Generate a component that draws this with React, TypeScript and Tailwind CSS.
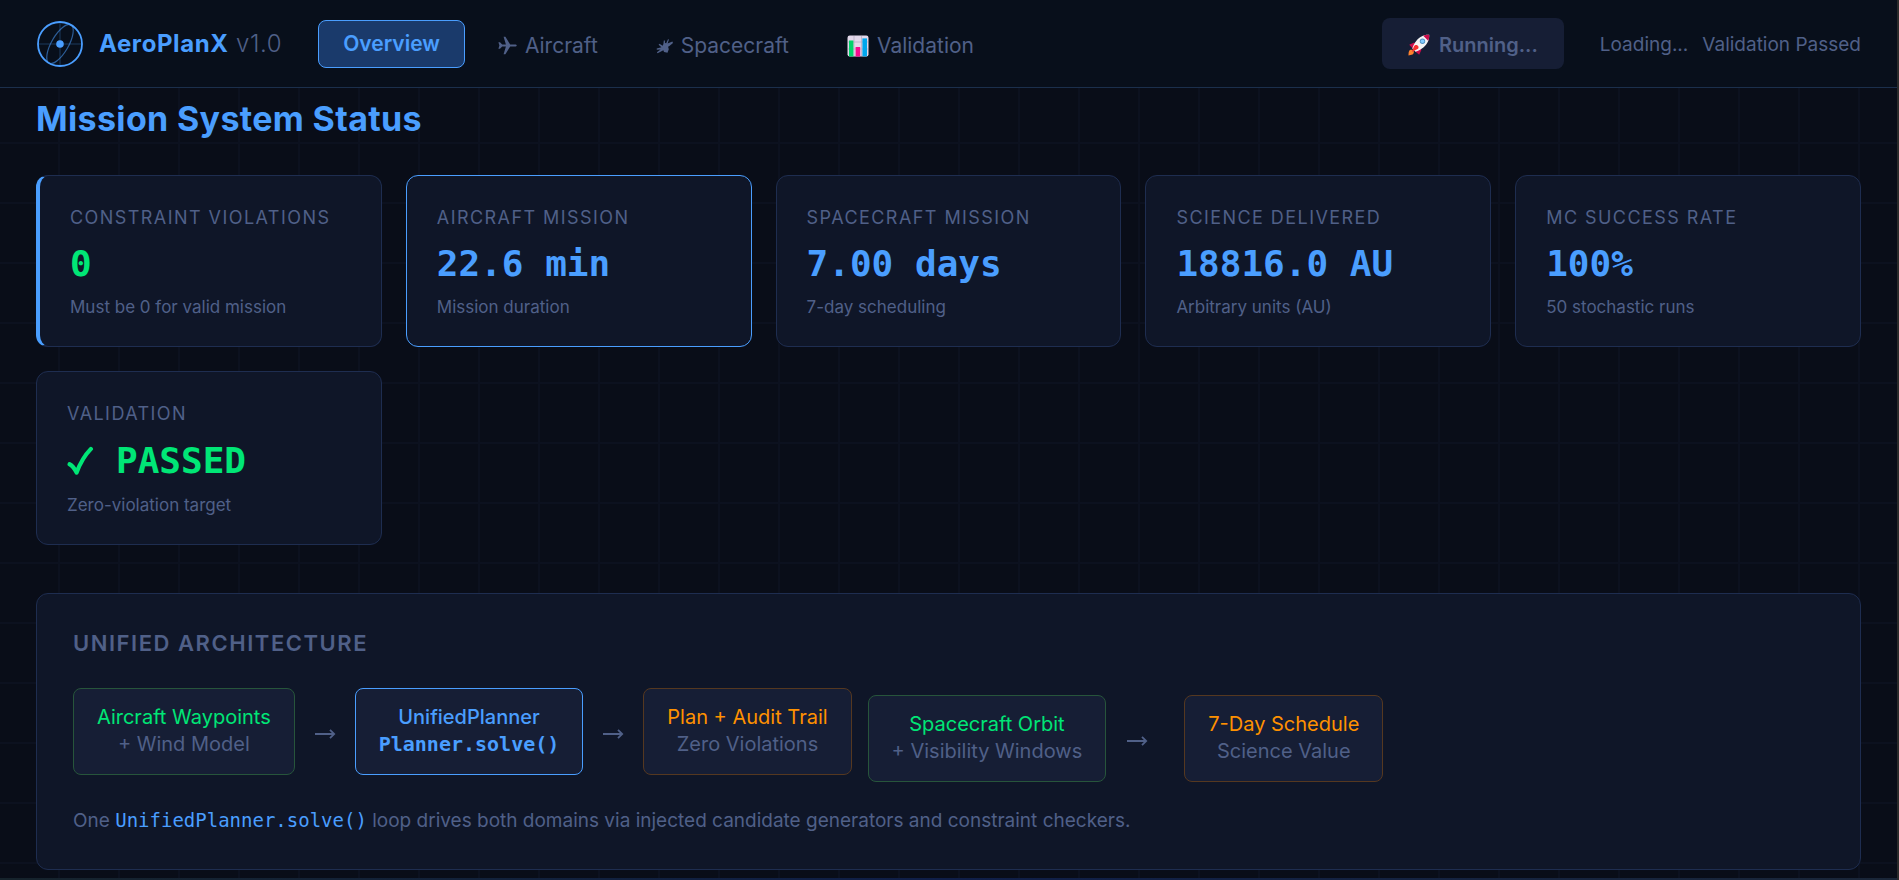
import { useState, type ReactNode } from "react";

interface Metric {
  label: string;
  value: string;
  note: string;
  valueClass: string;
  cardClass: string;
  passed?: boolean;
}

const metrics: Metric[] = [
  {
    label: "Constraint Violations",
    value: "0",
    note: "Must be 0 for valid mission",
    valueClass: "leading-[48px] text-[#00e676]",
    cardClass: "border-[#1e2d50] border-l-4 border-l-[#4a9eff]",
  },
  {
    label: "Aircraft Mission",
    value: "22.6 min",
    note: "Mission duration",
    valueClass: "leading-[48px] text-[#4a9eff]",
    cardClass: "border-[#4a9eff]",
  },
  {
    label: "Spacecraft Mission",
    value: "7.00 days",
    note: "7-day scheduling",
    valueClass: "leading-[48px] text-[#4a9eff]",
    cardClass: "border-[#1e2d50]",
  },
  {
    label: "Science Delivered",
    value: "18816.0 AU",
    note: "Arbitrary units (AU)",
    valueClass: "leading-[48px] text-[#4a9eff]",
    cardClass: "border-[#1e2d50]",
  },
  {
    label: "MC Success Rate",
    value: "100%",
    note: "50 stochastic runs",
    valueClass: "leading-[48px] text-[#4a9eff]",
    cardClass: "border-[#1e2d50]",
  },
  {
    label: "Validation",
    value: "PASSED",
    note: "Zero-violation target",
    valueClass: "leading-[50px] text-[#00e676]",
    cardClass: "border-[#1e2d50]",
    passed: true,
  },
];

const MONO = "font-['DejaVu_Sans_Mono',monospace]";

function Logo() {
  return (
    <svg width="48" height="48" viewBox="0 0 48 48" fill="none" stroke="#4a9eff">
      <path d="M24 2v44M2 24h44" strokeWidth="1.5" opacity="0.2" />
      <circle cx="24" cy="24" r="22" strokeWidth="1.8" />
      <ellipse
        cx="24"
        cy="24"
        rx="8.5"
        ry="22"
        strokeWidth="1.2"
        opacity="0.55"
        transform="rotate(30 24 24)"
      />
      <circle cx="24" cy="24" r="3.8" fill="#4a9eff" stroke="none" />
    </svg>
  );
}

function PlaneIcon() {
  return (
    <svg width="19" height="19" viewBox="0 0 19 19" fill="currentColor">
      <path d="M.4 6.2H2l2.200 2.300h3.700L5.600.8h1.800l4.800 7.700H17c1 0 1.700.4 1.700 1s-.7 1-1.700 1h-4.800l-4.800 7.700H5.600l2.300-7.700H4.200L2 12.800H.4l1-3.300z" />
    </svg>
  );
}

function SatelliteIcon() {
  return (
    <svg width="17" height="16" viewBox="0 0 17 16" fill="currentColor">
      <path d="M7.4 6 7.800 2.400l1.100.1.100 2.600 1.200.2L12 1.200l1 .4-1.400 3.800 4.800-1.800.6 1.300-3.600 3-1.300.8.7 2.500-1.300 3.500-3.500-.8-.6-1.700-5.800 3-.7-1 3.700-2.700-3.800.2-.1-1.300 4.700-1.200-2.800-2.400.8-1 3.300 1.900z" />
    </svg>
  );
}

function ChartIcon() {
  return (
    <svg width="22" height="22" viewBox="0 0 22 22">
      <rect x="0.5" y="0.5" width="21" height="21" rx="2.2" fill="#e2d8ea" />
      <path
        d="M7 1v20M14.5 1v20M1 7h20M1 14h20"
        stroke="#b9aec6"
        strokeWidth="0.8"
      />
      <rect x="2" y="5.5" width="4.4" height="16" fill="#00d26a" />
      <rect x="8.6" y="12" width="4.6" height="9.5" fill="#f70a8d" />
      <rect x="15.4" y="3.4" width="4.6" height="18" fill="#00a6ed" />
    </svg>
  );
}

function RocketIcon() {
  return (
    <svg width="22" height="22" viewBox="0 0 22 22">
      <path d="M1.6 16.2c1.6-1 3.8-.3 4.2 1.3.3 1.7-.8 3-2.3 3.3l-3 .7c0-2 .1-4.4 1.1-5.3z" fill="#ff822d" />
      <path d="M1.2 10.8 6.2 8.5l3 3-4.5 3zM11.2 20.8l2.3-5-3-3-3.3 4.7z" fill="#ca0b4a" />
      <path d="M21.2.8c-5.7-.3-9.7 2.2-12.6 5.8C6.7 9 5.3 11.6 4.3 14.5l3.2 3.2c2.9-1 5.5-2.4 7.9-4.3 3.6-2.9 6.1-6.9 5.8-12.6z" fill="#f4f4f4" />
      <path d="M21.2.8c-2.3-.1-4.3.2-6 1l5 5c.8-1.7 1.1-3.7 1-6z" fill="#ca0b4a" />
      <path d="m3.8 17.9 2-5.2c.5-1.3 2-2 3.4-1.4 1.4.7 1.8 2.3.9 3.4z" fill="#f8312f" />
      <circle cx="14.5" cy="7.3" r="2.7" fill="#5092c4" />
      <circle cx="14.5" cy="7.3" r="1.8" fill="#83cbff" />
    </svg>
  );
}

function CheckIcon() {
  return (
    <svg
      width="27"
      height="30"
      viewBox="0 0 27 30"
      fill="none"
      stroke="currentColor"
      strokeLinecap="round"
      strokeLinejoin="round"
      strokeWidth="4.2"
    >
      <path d="M2.6 18.2c2.4 1 4.800 4 7 8.400C12.400 19 17.200 9.800 23.900 2.900" />
    </svg>
  );
}

const tabs: { name: string; icon: ReactNode }[] = [
  { name: "Overview", icon: null },
  { name: "Aircraft", icon: <PlaneIcon /> },
  { name: "Spacecraft", icon: <SatelliteIcon /> },
  { name: "Validation", icon: <ChartIcon /> },
];

function MetricCard({ metric }: { metric: Metric }) {
  return (
    <article
      className={`rounded-xl border bg-[#0f1628] px-[30px] pt-[30px] pb-[27px] ${metric.cardClass}`}
    >
      <h2 className="text-lg leading-6 tracking-[0.08em] whitespace-nowrap uppercase">
        {metric.label}
      </h2>
      <p
        className={`mt-[10px] flex items-center gap-[22px] text-[36px] font-bold whitespace-nowrap ${MONO} ${metric.valueClass}`}
      >
        {metric.passed && <CheckIcon />}
        {metric.value}
      </p>
      <p className="mt-[7px] text-[17px] leading-6">{metric.note}</p>
    </article>
  );
}

function FlowBox({
  className,
  title,
  titleClass,
  children,
}: {
  className: string;
  title: string;
  titleClass: string;
  children: ReactNode;
}) {
  return (
    <div
      className={`rounded-lg border bg-[#161e35] px-[23px] pt-[15px] pb-4 text-center text-xl leading-[27px] whitespace-nowrap ${className}`}
    >
      <div className={titleClass}>{title}</div>
      {children}
    </div>
  );
}

function Arrow() {
  return (
    <svg
      className="mt-1"
      width="22"
      height="12"
      viewBox="0 0 22 12"
      fill="none"
      stroke="currentColor"
      strokeWidth="1.8"
    >
      <path d="M1 6h19M16 1.8 20.2 6 16 10.2" />
    </svg>
  );
}

export default function App() {
  const [active, setActive] = useState("Overview");

  return (
    <div className="min-h-screen border-r-2 border-[#2b2b2b] bg-[#090d18] font-[Inter,sans-serif] text-[#506088]">
      {/* Top bar */}
      <header className="flex h-[88px] items-center border-b border-[#1b2f4c] bg-[#080f1b] px-9">
        <div className="flex items-center gap-[15px]">
          <Logo />
          <div className="text-2xl tracking-wide whitespace-nowrap">
            <span className="font-bold text-[#4a9eff]">AeroPlanX</span>{" "}
            <span className="font-light">v1.0</span>
          </div>
        </div>

        <nav className="ml-9 flex items-center gap-2">
          {tabs.map((tab) => (
            <button
              key={tab.name}
              type="button"
              onClick={() => setActive(tab.name)}
              className={`flex h-12 items-center gap-2 rounded-lg border px-6 text-[21px] ${
                tab.icon ? "pt-1" : ""
              } ${
                active === tab.name
                  ? "border-[#4a9eff] bg-[#1a3a6b] font-semibold text-[#4a9eff]"
                  : "border-transparent"
              }`}
            >
              {tab.icon}
              {tab.name}
            </button>
          ))}
        </nav>

        <div className="ml-auto flex items-center gap-9">
          <button
            type="button"
            className="flex h-[51px] items-center gap-[9px] rounded-lg bg-[#161e35] px-[26px] pt-[3px] text-xl font-semibold"
          >
            <RocketIcon />
            Running...
          </button>
          <div className="flex gap-[14px] pt-1 text-[19px] whitespace-nowrap">
            <span>Loading...</span>
            <span>Validation Passed</span>
          </div>
        </div>
      </header>

      {/* Dashboard over the 60px grid */}
      <main className="bg-[linear-gradient(#0c111f_2px,transparent_2px),linear-gradient(90deg,#0c111f_2px,transparent_2px)] bg-[size:60px_60px] bg-[position:58px_54px] px-9 pt-[10px] pb-2">
        <h1 className="text-[34px] leading-[42px] font-bold tracking-[0.01em] text-[#4a9eff]">
          Mission System Status
        </h1>

        <section className="mt-[35px] grid grid-cols-5 gap-6">
          {metrics.map((metric) => (
            <MetricCard key={metric.label} metric={metric} />
          ))}
        </section>

        <section className="mt-12 rounded-xl border border-[#1e2d50] bg-[#0f1628] px-9 pt-[35px] pb-[34px]">
          <h2 className="text-[22px] leading-7 font-semibold tracking-[0.07em] uppercase">
            Unified Architecture
          </h2>

          <div className="mt-[31px] flex items-start">
            <div className="flex items-center gap-[19px]">
              <FlowBox
                className="border-[#27553b]"
                title="Aircraft Waypoints"
                titleClass="text-[#00e676]"
              >
                <div>+ Wind Model</div>
              </FlowBox>
              <Arrow />
              <FlowBox
                className="border-[#4a9eff] text-[#4a9eff]"
                title="UnifiedPlanner"
                titleClass="font-medium"
              >
                <div className={`font-bold ${MONO}`}>Planner.solve()</div>
              </FlowBox>
              <Arrow />
              <FlowBox
                className="border-[#553820]"
                title="Plan + Audit Trail"
                titleClass="text-[#ff9100]"
              >
                <div>Zero Violations</div>
              </FlowBox>
            </div>
            <div className="mt-[7px] ml-4 flex items-center">
              <FlowBox
                className="border-[#27553b]"
                title="Spacecraft Orbit"
                titleClass="text-[#00e676]"
              >
                <div>+ Visibility Windows</div>
              </FlowBox>
              <div className="pr-9 pl-5">
                <Arrow />
              </div>
              <FlowBox
                className="border-[#553820]"
                title="7-Day Schedule"
                titleClass="text-[#ff9100]"
              >
                <div>Science Value</div>
              </FlowBox>
            </div>
          </div>

          <p className="mt-6 text-[19px] leading-7">
            One <code className={`text-[#4a9eff] ${MONO}`}>UnifiedPlanner.solve()</code> loop
            drives both domains via injected candidate generators and constraint
            checkers.
          </p>
        </section>
      </main>
      <div className="h-[3px] bg-linear-to-r from-[#16232c] via-[#0f1e48] to-[#1a2638]" />
    </div>
  );
}
